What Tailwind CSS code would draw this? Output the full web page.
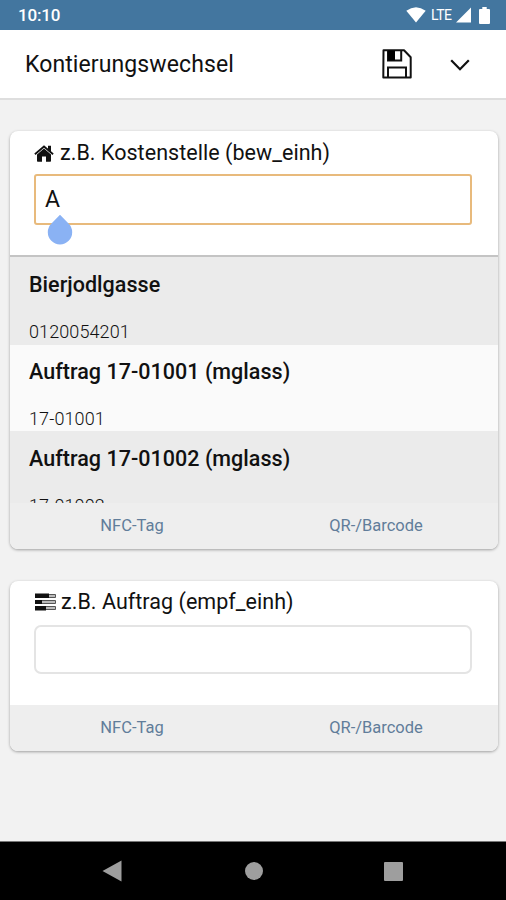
<!DOCTYPE html>
<html lang="de">
<head>
<meta charset="utf-8">
<title>Kontierungswechsel</title>
<script src="https://cdn.jsdelivr.net/npm/@tailwindcss/browser@4"></script>
</head>
<body class="w-[506px] h-[900px] overflow-hidden flex flex-col bg-[#f2f2f2] font-[Roboto,sans-serif] text-[#111]">
  <div class="h-[30px] shrink-0 bg-[#43769f] flex items-center justify-between pl-[18px] pr-[16px] text-white">
    <span class="text-[17px] leading-[30px] font-medium tracking-[-0.2px]">10:10</span>
    <div class="flex items-center">
      <svg class="w-[20px] h-[16px]" viewBox="0 0 20 16"><path fill="#fff" d="M.3 3.8Q10-3.4 19.7 3.8L10 15.6z"/></svg>
      <span class="ml-[5px] w-[22px] text-[14px] tracking-[-0.5px] leading-[30px]">LTE</span>
      <svg class="ml-[3px] w-[15px] h-[16px]" viewBox="0 0 15 16"><path fill="#fff" d="M15 .5V15.5H0z"/></svg>
      <svg class="ml-[8px] w-[11px] h-[17px]" viewBox="0 0 11 17"><path fill="#fff" d="M3.3 0h4.400v2H10q1 0 1 1v13q0 1-1 1H1q-1 0-1-1V3q0-1 1-1h2.300z"/></svg>
    </div>
  </div>
  <header class="h-[70px] shrink-0 bg-white border-b-2 border-[#dedede] flex items-center pl-[25px] pr-[36px]">
    <h1 class="flex-1 pt-[1px] text-[23px] tracking-[0.1px] leading-[30px]">Kontierungswechsel</h1>
    <svg class="w-[30px] h-[30px]" viewBox="0 0 30 30" fill="none" stroke="#111" stroke-width="2"><path d="M1.500 1.300H22l6.700 7V28.500H1.300z" stroke-linejoin="round"/><path d="M6 1.500V11.500H19.200V1.500M6 28.500V18.500H24V28.500"/><path d="M6 1.500h7v10H6z" fill="#000" stroke="none"/></svg>
    <svg class="ml-[38px] mt-[2px] w-[20px] h-[12px]" viewBox="0 0 20 12" fill="none" stroke="#111" stroke-width="2.200"><path d="M1.200 1.300 10 10.300 18.800 1.300"/></svg>
  </header>
  <main class="flex-1 px-[10px] pt-[31px] pr-[8px]">
    <section class="h-[418px] rounded-[8px] bg-white overflow-hidden flex flex-col shadow-[0_1px_3px_rgba(0,0,0,0.35)]">
      <div class="h-[126px] shrink-0 border-b-2 border-[#c4c4c4] px-[24px] pt-[7px] pr-[26px]">
        <label class="flex items-center h-[30px] text-[21.500px] tracking-[0.04px] leading-[30px] whitespace-nowrap">
          <svg class="w-[20px] h-[17px] mr-[6px]" viewBox="0 0 20 17"><path fill="#111" d="M10 3.500 17 9.500V16q0 .8-.8.8H12V11.500H8V16.800H3.800Q3 16.800 3 16V9.500z"/><path d="M.9 9.300 10 1.500 19.100 9.300" fill="none" stroke="#111" stroke-width="1.800"/><path fill="#111" d="M14 .8h3V7l-3-2.500z"/></svg>
          <span>z.B. Kostenstelle (bew_einh)</span>
        </label>
        <div class="relative mt-[6px] h-[51px] border-2 border-[#e8ba7c] rounded-[3px] px-[9px] text-[23px] leading-[48px]">A
          <svg class="absolute left-[11px] top-[38px] w-[26px] h-[31px]" viewBox="0 0 26 31"><path fill="#8ab2f4" d="M13 .8 21.500 9.500A12.200 12.200 0 1 1 4.500 9.500z"/></svg>
        </div>
      </div>
      <ul class="h-[246px] shrink-0 overflow-hidden">
        <li class="h-[88px] px-[19px] pt-[13px] bg-[#ebebeb]"><div class="text-[21.500px] leading-[30px] font-medium tracking-[0.03px]">Bierjodlgasse</div><div class="mt-[20px] text-[18px] leading-[24px] font-light tracking-[0.1px]">0120054201</div></li>
        <li class="h-[86px] px-[19px] pt-[12px] bg-[#fafafa]"><div class="text-[21.500px] leading-[30px] font-medium tracking-[0.03px]">Auftrag 17-01001 (mglass)</div><div class="mt-[20px] text-[18px] leading-[24px] font-light tracking-[0.1px]">17-01001</div></li>
        <li class="h-[88px] px-[19px] pt-[13px] bg-[#ebebeb]"><div class="text-[21.500px] leading-[30px] font-medium tracking-[0.03px]">Auftrag 17-01002 (mglass)</div><div class="mt-[20px] text-[18px] leading-[24px] font-light tracking-[0.1px]">17-01002</div></li>
      </ul>
      <div class="flex-1 grid grid-cols-2 bg-[#eee] text-center text-[16.500px] leading-[45px] text-[#617d9a]"><span>NFC-Tag</span><span>QR-/Barcode</span></div>
    </section>
    <section class="mt-[32px] h-[170px] rounded-[8px] bg-white overflow-hidden flex flex-col shadow-[0_1px_3px_rgba(0,0,0,0.35)]">
      <div class="h-[124px] shrink-0 px-[24px] pt-[6px] pr-[26px]">
        <label class="flex items-center h-[30px] text-[21.500px] tracking-[0.04px] leading-[30px] whitespace-nowrap">
          <svg class="w-[22px] h-[18px] mr-[5px]" viewBox="0 0 22 18"><g fill="#bbb" stroke="#555" stroke-width="1"><path d="M1.500 1.500h20v3h-20zM1.500 7.500h20v3h-20zM1.500 13.500h20v3h-20z"/></g><path fill="#111" d="M1 .5h14v4.500H1zM1 7h7v4H1zM1 13h11v4.500H1z"/></svg>
          <span>z.B. Auftrag (empf_einh)</span>
        </label>
        <div class="mt-[8px] h-[49px] border-2 border-[#e4e4e4] rounded-[7px]"></div>
      </div>
      <div class="flex-1 grid grid-cols-2 bg-[#eee] text-center text-[16.500px] leading-[45px] text-[#617d9a]"><span>NFC-Tag</span><span>QR-/Barcode</span></div>
    </section>
  </main>
  <nav class="h-[59px] shrink-0 bg-black border-t border-[#777] flex items-center">
    <svg class="ml-[102px] w-[20px] h-[22px]" viewBox="0 0 20 22"><path fill="#9e9e9e" d="M19.500.5v21L.5 11z"/></svg>
    <div class="ml-[123px] w-[18px] h-[18px] rounded-full bg-[#9e9e9e]"></div>
    <div class="ml-[121px] w-[19px] h-[19px] rounded-[1px] bg-[#9e9e9e]"></div>
  </nav>
</body>
</html>
